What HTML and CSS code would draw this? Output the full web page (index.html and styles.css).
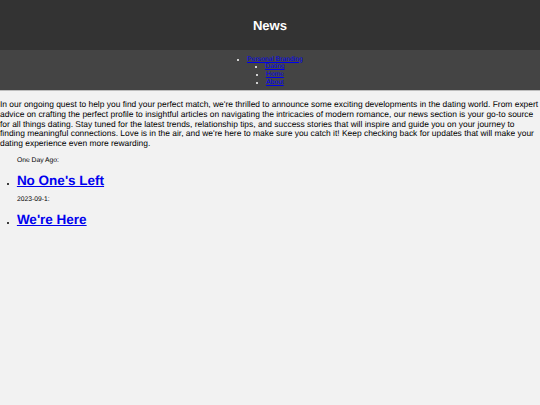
FILE: index.html
```html
<!DOCTYPE html>
<html>
<head>
<meta charset="utf-8">
<link rel="stylesheet" href="styles.css">
</head>
<body>
<header class="site-header">
  <h1 class="site-title">News</h1>
</header>
<nav class="site-nav">
  <ul class="nav-list">
    <li><a href="#">Personal Branding</a></li>
    <li><a href="#">Dating</a></li>
    <li><a href="#">Home</a></li>
    <li><a href="#">About</a></li>
  </ul>
</nav>
<main class="content">
  <p class="intro">In our ongoing quest to help you find your perfect match, we're thrilled to announce some exciting developments in the dating world. From expert advice on crafting the perfect profile to insightful articles on navigating the intricacies of modern romance, our news section is your go-to source for all things dating. Stay tuned for the latest trends, relationship tips, and success stories that will inspire and guide you on your journey to finding meaningful connections. Love is in the air, and we're here to make sure you catch it! Keep checking back for updates that will make your dating experience even more rewarding.</p>
  <ul class="news-list">
    <div class="news-date">One Day Ago:</div>
    <li class="news-item"><h2 class="news-title"><a href="#">No One's Left</a></h2></li>
    <div class="news-date">2023-09-1:</div>
    <li class="news-item"><h2 class="news-title"><a href="#">We're Here</a></h2></li>
  </ul>
</main>
</body>
</html>
```

FILE: styles.css
```css
html, body {
  margin: 0;
  padding: 0;
}
body {
  background: #f2f2f2;
  font-family: "Liberation Sans", Arial, sans-serif;
  color: #000;
  text-rendering: geometricPrecision;
}
.site-header {
  background: #333333;
  height: 50px;
  display: flex;
  align-items: center;
  justify-content: center;
}
.site-title {
  margin: 0;
  color: #ffffff;
  font-size: 13.08px;
  font-weight: bold;
}
.site-nav {
  background: #444444;
  padding: 5.7px 0 2.75px;
  border-bottom: 1.27px solid #bdbdbd;
}
.nav-list {
  margin: 0;
  padding: 0;
  list-style: disc inside;
  text-align: center;
  font-size: 6.75px;
  line-height: 7.76px;
  color: #ffffff;
}
.nav-list a {
  color: #0000ee;
}
.intro {
  font-size: 8.4375px;
  line-height: 9.7px;
  margin: 9.7px 0 8.44px;
}
.news-list {
  margin: 0;
  padding-left: 16.875px;
  font-size: 6.75px;
}
.news-date {
  font-size: 6.75px;
  line-height: 7.76px;
  margin: 0 0 7.86px;
}
.news-title {
  font-size: 13.5px;
  line-height: 15.52px;
  margin: 0 0 8.17px;
}
.news-title a {
  color: #0000ee;
}
```
